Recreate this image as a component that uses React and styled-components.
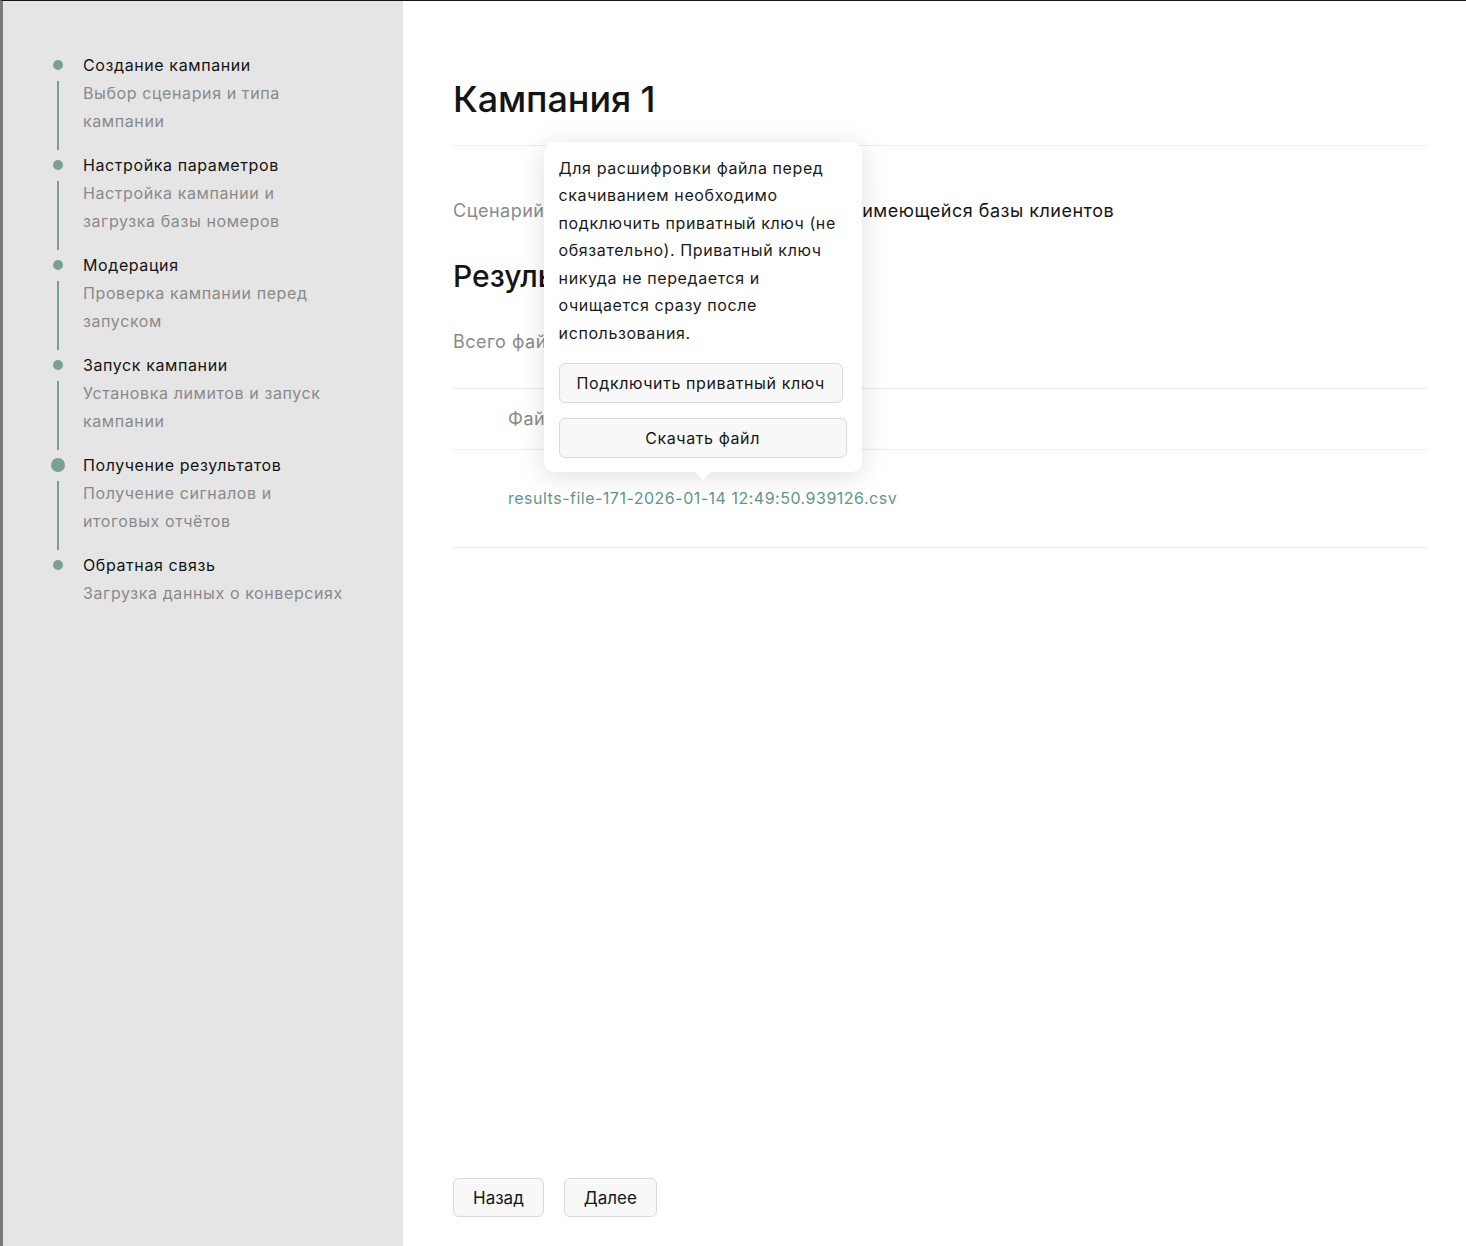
import React from "react";
import styled, { createGlobalStyle } from "styled-components";

const Global = createGlobalStyle`
  html, body { margin: 0; padding: 0; }
  body {
    font-family: Inter, "Noto Sans", sans-serif;
    color: #161616;
    background: #fff;
    letter-spacing: 0.6px;
  }
  * { box-sizing: border-box; }
`;

const Frame = styled.div`
  display: flex;
  min-height: 1246px;
  border-top: 1px solid #141414;
  border-left: 3px solid #7a7a7a;
`;

const Sidebar = styled.aside`
  width: 400px;
  flex: none;
  background: #e5e5e5;
  padding: 50px 40px 0 40px;
`;

const Step = styled.div`
  display: grid;
  grid-template-columns: 30px 1fr;
  column-gap: 10px;
  padding-bottom: ${(p) => (p.$last ? 0 : 16)}px;
`;

const DotCell = styled.div`
  height: 28px;
  display: flex;
  align-items: center;
  justify-content: center;
`;

const Dot = styled.span`
  width: ${(p) => (p.$active ? 14 : 10)}px;
  height: ${(p) => (p.$active ? 14 : 10)}px;
  border-radius: 50%;
  background: #79a191;
`;

const LineCell = styled.div`
  display: flex;
  justify-content: center;
  padding-top: 2px;
  margin-bottom: -15px;
`;

const Line = styled.span`
  width: 2px;
  background: #79a191;
  height: 100%;
`;

const StepTitle = styled.div`
  font-size: 16px;
  line-height: 28px;
  color: #141414;
`;

const StepSub = styled.div`
  font-size: 16px;
  line-height: 28px;
  color: #8a8a8a;
  max-width: 265px;
`;

const Main = styled.main`
  flex: 1;
  display: flex;
  flex-direction: column;
  padding: 75px 39px 29px 50px;
`;

const Title = styled.h1`
  margin: 0;
  font-size: 36px;
  line-height: 46px;
  font-weight: 500;
  letter-spacing: -0.1px;
  color: #141414;
`;

const Rule = styled.hr`
  margin: 23px 0 0;
  border: 0;
  border-top: 1px solid #ececec;
`;

const InfoRow = styled.div`
  display: flex;
  font-size: 18px;
  line-height: 28px;
  letter-spacing: 0.5px;
  margin-top: ${(p) => p.$mt}px;
`;

const Label = styled.span`
  color: #8a8a8a;
  width: ${(p) => p.$w || "auto"};
  flex: none;
`;

const Value = styled.span`
  color: #161616;
`;

const SectionTitle = styled.h2`
  margin: 31px 0 0;
  font-size: 30px;
  line-height: 40px;
  font-weight: 500;
  letter-spacing: 0;
  color: #141414;
`;

const Table = styled.table`
  margin-top: 32px;
  width: 100%;
  border-collapse: collapse;
  border-top: 1px solid #ececec;
`;

const Th = styled.th`
  text-align: left;
  font-weight: 400;
  font-size: 18px;
  line-height: 28px;
  letter-spacing: 0.5px;
  color: #8a8a8a;
  padding: 16px 0 16px 55px;
  height: 60px;
  border-bottom: 1px solid #ececec;
`;

const Td = styled.td`
  font-size: 16px;
  line-height: 28px;
  letter-spacing: 0.5px;
  padding: 34px 0 35px 55px;
  border-bottom: 1px solid #ececec;
`;

const LinkWrap = styled.span`
  position: relative;
  display: inline-block;
`;

const FileLink = styled.a`
  color: #5f978a;
  text-decoration: none;
  cursor: pointer;
`;

const Popover = styled.div`
  position: absolute;
  left: 50%;
  bottom: calc(100% + 12px);
  transform: translateX(-50%);
  width: 318px;
  background: #fff;
  border-radius: 10px;
  padding: 13px 15px 14px;
  box-shadow: 0 4px 28px rgba(0, 0, 0, 0.13);
  letter-spacing: 0.6px;
  z-index: 5;
  &::after {
    content: "";
    position: absolute;
    left: 50%;
    bottom: -8px;
    margin-left: -8px;
    border-left: 8px solid transparent;
    border-right: 8px solid transparent;
    border-top: 8px solid #fff;
  }
`;

const PopText = styled.p`
  margin: 0;
  font-size: 16px;
  line-height: 27.5px;
  color: #1a1a1a;
`;

const PopActions = styled.div`
  display: flex;
  flex-direction: column;
  align-items: flex-start;
  gap: 15px;
  margin-top: 16px;
`;

const Button = styled.button`
  font-family: inherit;
  font-size: ${(p) => (p.$small ? 16 : 17)}px;
  letter-spacing: ${(p) => (p.$small ? "0.6px" : "0")};
  color: #161616;
  background: #f8f8f8;
  border: 1px solid #dadada;
  border-radius: 6px;
  height: ${(p) => (p.$small ? 40 : 39)}px;
  padding: 0 ${(p) => (p.$small ? 17 : 19)}px;
  width: ${(p) => (p.$full ? "100%" : "auto")};
  cursor: pointer;
`;

const Spacer = styled.div`
  flex: 1;
`;

const Footer = styled.div`
  display: flex;
  gap: 20px;
`;

const steps = [
  { title: "Создание кампании", sub: "Выбор сценария и типа кампании" },
  { title: "Настройка параметров", sub: "Настройка кампании и загрузка базы номеров" },
  { title: "Модерация", sub: "Проверка кампании перед запуском" },
  { title: "Запуск кампании", sub: "Установка лимитов и запуск кампании" },
  { title: "Получение результатов", sub: "Получение сигналов и итоговых отчётов", active: true },
  { title: "Обратная связь", sub: "Загрузка данных о конверсиях" },
];

export default function App() {
  return (
    <>
      <Global />
      <Frame>
        <Sidebar>
          {steps.map((s, i) => {
            const last = i === steps.length - 1;
            return (
              <Step key={s.title} $last={last}>
                <DotCell>
                  <Dot $active={s.active} />
                </DotCell>
                <StepTitle>{s.title}</StepTitle>
                <LineCell>{!last && <Line />}</LineCell>
                <StepSub>{s.sub}</StepSub>
              </Step>
            );
          })}
        </Sidebar>
        <Main>
          <Title>Кампания 1</Title>
          <Rule />
          <InfoRow $mt={51}>
            <Label $w="94px">Сценарий</Label>
            <Value>Поиск новых клиентов на основе имеющейся базы клиентов</Value>
          </InfoRow>
          <SectionTitle>Результаты</SectionTitle>
          <InfoRow $mt={32}>
            <Label>Всего файлов:&nbsp;</Label>
            <Value>1</Value>
          </InfoRow>
          <Table>
            <thead>
              <tr>
                <Th>Файл</Th>
              </tr>
            </thead>
            <tbody>
              <tr>
                <Td>
                  <LinkWrap>
                    <FileLink>results-file-171-2026-01-14 12:49:50.939126.csv</FileLink>
                    <Popover>
                      <PopText>
                        Для расшифровки файла перед скачиванием необходимо подключить приватный ключ (не
                        обязательно). Приватный ключ никуда не передается и очищается сразу после
                        использования.
                      </PopText>
                      <PopActions>
                        <Button $small>Подключить приватный ключ</Button>
                        <Button $small $full>Скачать файл</Button>
                      </PopActions>
                    </Popover>
                  </LinkWrap>
                </Td>
              </tr>
            </tbody>
          </Table>
          <Spacer />
          <Footer>
            <Button>Назад</Button>
            <Button>Далее</Button>
          </Footer>
        </Main>
      </Frame>
    </>
  );
}
